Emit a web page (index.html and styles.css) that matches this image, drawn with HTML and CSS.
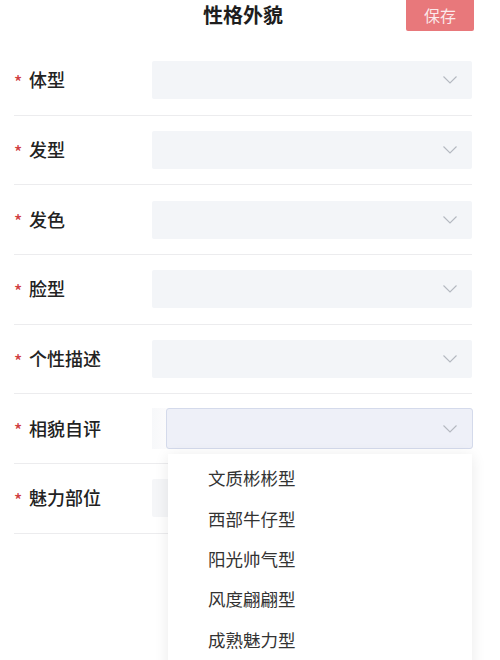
FILE: index.html
```html
<!DOCTYPE html>
<html lang="zh">
<head>
<meta charset="utf-8">
<link rel="stylesheet" href="styles.css">
</head>
<body>
<div class="page">
  <header class="header">
    <div></div>
    <h1 class="title">性格外貌</h1>
    <button class="save">保存</button>
  </header>
  <div class="form">
    <div class="row">
      <div class="label"><span class="star">*</span>体型</div>
      <div class="select"><svg class="chev" viewBox="0 0 14 8"><polyline points="0.5,0.5 7,7 13.5,0.5"/></svg></div>
    </div>
    <div class="row">
      <div class="label"><span class="star">*</span>发型</div>
      <div class="select"><svg class="chev" viewBox="0 0 14 8"><polyline points="0.5,0.5 7,7 13.5,0.5"/></svg></div>
    </div>
    <div class="row">
      <div class="label"><span class="star">*</span>发色</div>
      <div class="select"><svg class="chev" viewBox="0 0 14 8"><polyline points="0.5,0.5 7,7 13.5,0.5"/></svg></div>
    </div>
    <div class="row">
      <div class="label"><span class="star">*</span>脸型</div>
      <div class="select"><svg class="chev" viewBox="0 0 14 8"><polyline points="0.5,0.5 7,7 13.5,0.5"/></svg></div>
    </div>
    <div class="row">
      <div class="label"><span class="star">*</span>个性描述</div>
      <div class="select"><svg class="chev" viewBox="0 0 14 8"><polyline points="0.5,0.5 7,7 13.5,0.5"/></svg></div>
    </div>
    <div class="row row-open">
      <div class="label"><span class="star">*</span>相貌自评</div>
      <div class="select-wrap">
        <div class="select select-focus"><svg class="chev" viewBox="0 0 14 8"><polyline points="0.5,0.5 7,7 13.5,0.5"/></svg></div>
      </div>
      <ul class="dropdown">
        <li class="option">文质彬彬型</li>
        <li class="option">西部牛仔型</li>
        <li class="option">阳光帅气型</li>
        <li class="option">风度翩翩型</li>
        <li class="option">成熟魅力型</li>
      </ul>
    </div>
    <div class="row">
      <div class="label"><span class="star">*</span>魅力部位</div>
      <div class="select select-faint"></div>
    </div>
  </div>
</div>
</body>
</html>
```

FILE: styles.css
```css
* { box-sizing: border-box; }
html, body {
  margin: 0;
  padding: 0;
  background: #ffffff;
  font-family: "Noto Sans CJK SC", "Noto Sans", sans-serif;
  color: #222;
}
.page {
  width: 500px;
  height: 660px;
  overflow: hidden;
  position: relative;
}
.header {
  height: 46px;
  display: grid;
  grid-template-columns: 1fr auto 1fr;
  align-items: start;
  padding: 0 26px 0 12px;
}
.title {
  margin: 0;
  font-size: 20px;
  font-weight: 700;
  line-height: 30px;
  color: #1e1e1e;
}
.save {
  justify-self: end;
  width: 68px;
  height: 31px;
  border: none;
  border-radius: 0 0 2px 2px;
  background: #e8787b;
  color: rgba(255,255,255,0.85);
  font-family: inherit;
  font-size: 16px;
  padding: 0;
  line-height: 31px;
}
.form {
  padding: 0 28px 0 14px;
}
.row {
  height: 69.7px;
  border-bottom: 1px solid #ececee;
  display: flex;
  align-items: center;
  position: relative;
}
.label {
  width: 138px;
  flex: none;
  font-size: 18px;
  font-weight: 500;
  color: #222;
  display: flex;
  align-items: center;
  padding-bottom: 2px;
}
.star {
  color: #d0403f;
  font-size: 17px;
  width: 15px;
  line-height: 1;
  padding-top: 4px;
}
.select {
  flex: 1;
  height: 38px;
  background: #f3f5f8;
  border-radius: 2px;
  display: flex;
  align-items: center;
  justify-content: flex-end;
  padding-right: 15px;
}
.chev {
  width: 14px;
  height: 8px;
  fill: none;
  stroke: #b4b8c0;
  stroke-width: 1.1;
}
.select-wrap {
  flex: 1;
  height: 41px;
  background: linear-gradient(to right, #f7f8fa, #fbfbfc 14px);
  display: flex;
  padding-left: 14px;
  margin-top: 0;
}
.select-focus {
  height: 41px;
  background: #eef0f8;
  border: 1px solid #d4daeb;
  border-radius: 3px;
  margin-right: -1px;
  padding-right: 15px;
}
.select-faint {
  background: #f5f6f8;
}
.dropdown {
  position: absolute;
  left: 154px;
  top: 60px;
  width: 304px;
  height: 260px;
  margin: 0;
  padding: 4px 0 0 0;
  list-style: none;
  background: #ffffff;
  box-shadow: 0 2px 14px rgba(0,0,0,0.09);
  z-index: 5;
}
.option {
  height: 40.3px;
  line-height: 40px;
  padding-left: 40px;
  font-size: 17.5px;
  color: #333;
}
```
